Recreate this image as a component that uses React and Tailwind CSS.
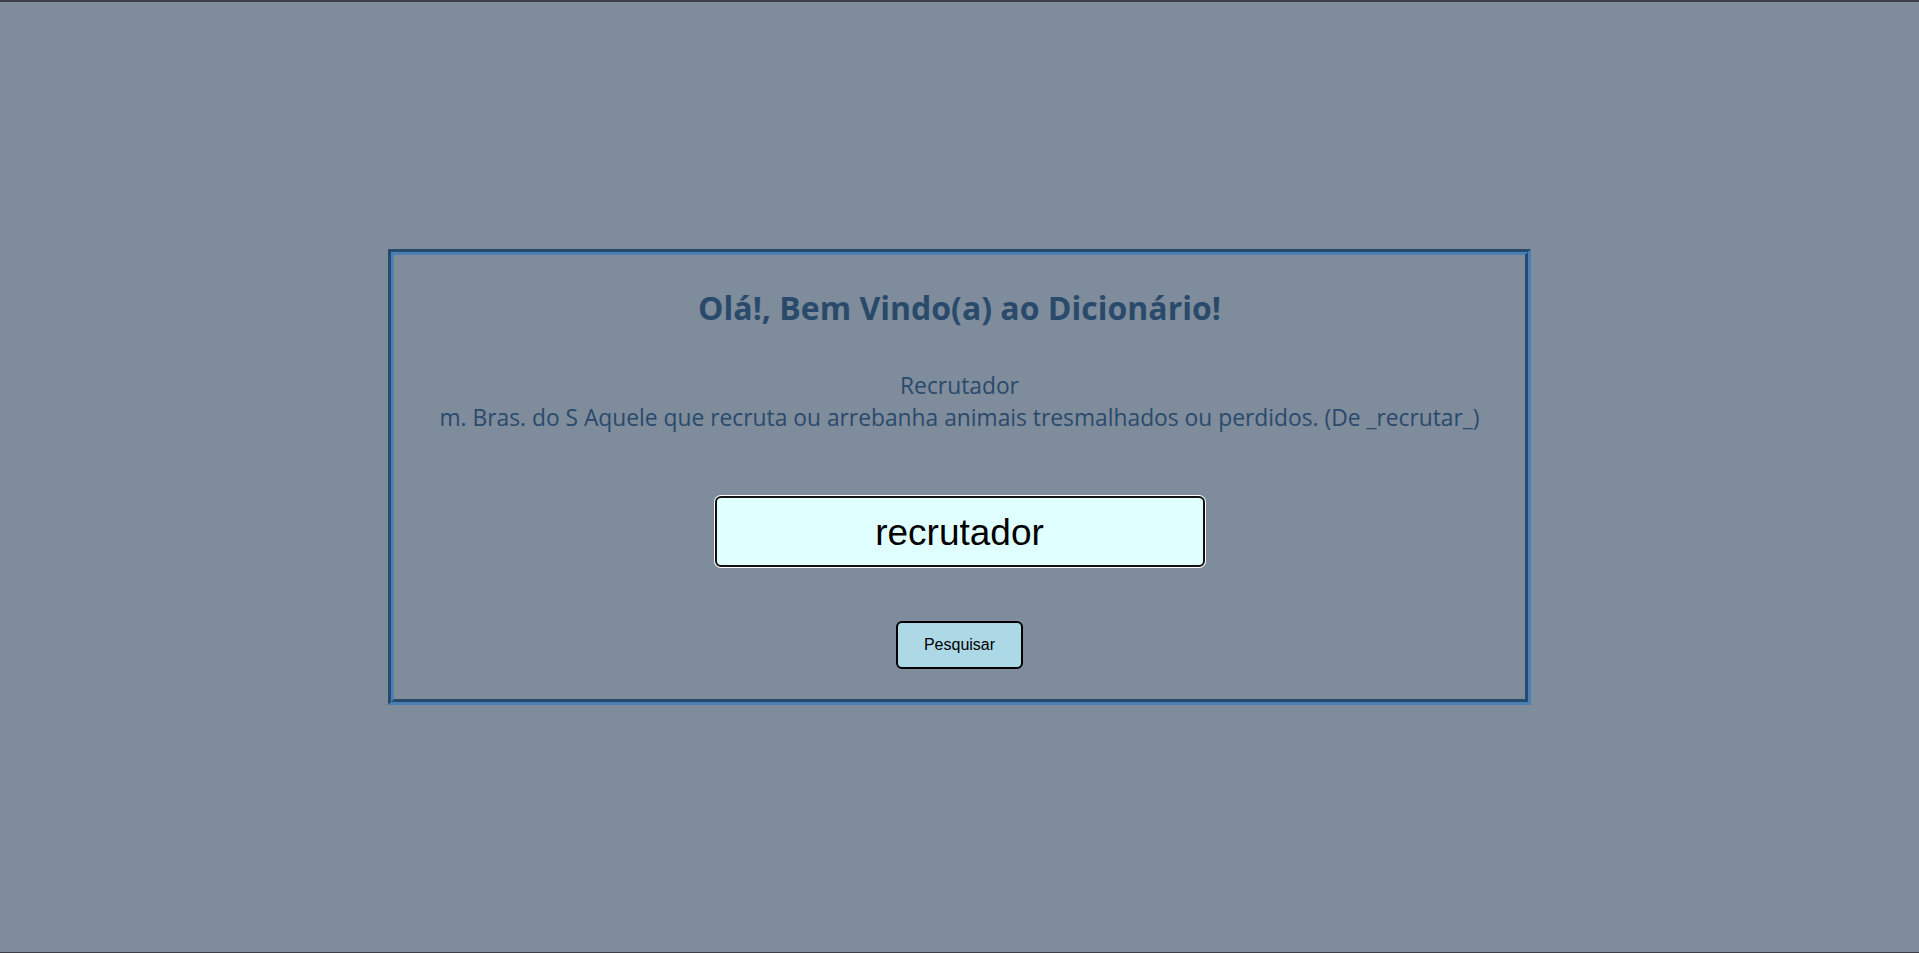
import { useState } from 'react'

export default function App() {
  const [word, setWord] = useState('recrutador')

  return (
    <div className="min-h-screen bg-[#7f8c9b] border-t-2 border-b border-[#3b3e46] flex items-center justify-center">
      {/* groove-style frame, done with two borders */}
      <div className="w-[1143px] h-[456px] border-[3px] border-t-[#254a6c] border-l-[#254a6c] border-b-[#4a80b5] border-r-[#4a80b5]">
        <div className="h-full border-[3px] border-t-[#4a80b5] border-l-[#4a80b5] border-b-[#254a6c] border-r-[#254a6c] flex flex-col items-center pt-[34px] text-[#2a4a6b] font-['Open_Sans',sans-serif]">
          <h1 className="text-[32px] leading-[38px] font-bold">Olá!, Bem Vindo(a) ao Dicionário!</h1>

          <div className="mt-[43px] text-center text-[22.8px] leading-[32px]">
            <p>Recrutador</p>
            <p>m. Bras. do S Aquele que recruta ou arrebanha animais tresmalhados ou perdidos. (De _recrutar_)</p>
          </div>

          <input
            autoFocus
            value={word}
            onChange={e => setWord(e.target.value)}
            className="mt-[62px] w-[490px] h-[71px] rounded-[6px] border-2 border-[#101010] ring-1 ring-white outline-none bg-[#e0ffff] text-center text-black text-[37px] pt-[3px] font-['Liberation_Sans',Arial,sans-serif]"
          />

          <button className="mt-[54px] w-[127px] h-[48px] rounded-[6px] border-2 border-black bg-[#add8e6] text-black text-[16px] font-['Liberation_Sans',Arial,sans-serif]">
            Pesquisar
          </button>
        </div>
      </div>
    </div>
  )
}
